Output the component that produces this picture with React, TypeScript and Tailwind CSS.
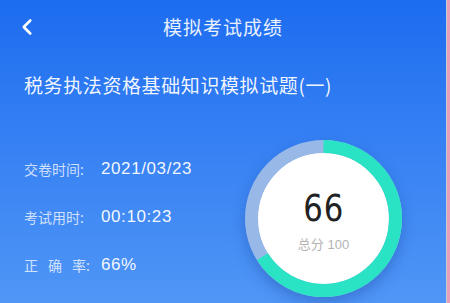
import { ChevronLeft } from 'lucide-react';

const rows = [
    { label: '交卷时间', value: '2021/03/23' },
    { label: '考试用时', value: '00:10:23' },
    { label: '正确率', value: '66%', spaced: true },
];

const ScoreRing = ({ score, total }: { score: number; total: number }) => {
    const r = 72;
    const c = 2 * Math.PI * r;
    const done = (score / total) * c;

    return (
        <div className="relative w-[157px] h-[157px] rounded-full shadow-[0_6px_14px_rgba(20,60,150,0.35)]">
            <svg width="157" height="157" viewBox="0 0 157 157" className="absolute inset-0">
                <circle cx="78.5" cy="78.5" r="66" fill="#ffffff" />
                <circle cx="78.5" cy="78.5" r={r} fill="none" stroke="#98b8e8" strokeWidth="13" />
                <circle
                    cx="78.5"
                    cy="78.5"
                    r={r}
                    fill="none"
                    stroke="#2ae3c4"
                    strokeWidth="13"
                    strokeDasharray={`${done} ${c}`}
                    transform="rotate(-90 78.5 78.5)"
                />
            </svg>
            <div className="absolute inset-0 flex flex-col items-center justify-center">
                <span className="text-[38px] leading-none text-[#222] tracking-[1px] mt-[2px] font-['DejaVu_Sans_Condensed','Roboto',sans-serif] scale-x-[0.9]">
                    {score}
                </span>
                <span className="text-[13px] leading-none text-[#b4b4b4] mt-[11px] font-['Liberation_Sans','Noto_Sans_CJK_SC',sans-serif]">
                    总分 {total}
                </span>
            </div>
        </div>
    );
};

const App = () => {
    return (
        <div className="w-[450px] h-[303px] overflow-hidden flex font-['Noto_Sans_CJK_SC',sans-serif]">
            <div className="flex-1 flex flex-col bg-gradient-to-b from-[#1c6cf0] to-[#5096f6] text-white">
                {/* Header */}
                <div className="h-[54px] relative flex items-center justify-center">
                    <ChevronLeft className="absolute left-[14px] top-[14px] w-[26px] h-[26px]" strokeWidth={2.4} />
                    <span className="text-[19px] tracking-[1px] text-white/90">模拟考试成绩</span>
                </div>

                <div className="mt-[19px] pl-[24px] h-[24px] flex items-center text-[19px] tracking-[0.6px] text-white/95">
                    税务执法资格基础知识模拟试题(一)
                </div>

                <div className="mt-[43px] flex">
                    <div className="w-[245px] pl-[24px] pt-[5px] flex flex-col">
                        {rows.map((row) => (
                            <div key={row.label} className="h-[48px] flex items-center">
                                <span className="w-[77px] text-[14px] text-white/75 flex">
                                    {row.spaced ? (
                                        <span className="w-[62px] flex justify-between">
                                            <span>正</span>
                                            <span>确</span>
                                            <span>率</span>
                                        </span>
                                    ) : (
                                        row.label
                                    )}
                                    <span>:</span>
                                </span>
                                <span className="text-[17px] tracking-[0.6px] font-['Liberation_Sans',sans-serif] text-white/95">
                                    {row.value}
                                </span>
                            </div>
                        ))}
                    </div>
                    <ScoreRing score={66} total={100} />
                </div>
            </div>
            <div className="w-[1px] bg-[#c9c9d6]" />
            <div className="w-[3px] bg-[#e8a0b8]" />
        </div>
    );
};

export default App;
